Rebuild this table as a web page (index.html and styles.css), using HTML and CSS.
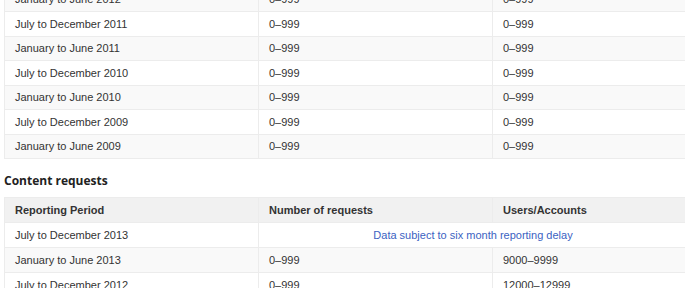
FILE: index.html
```html
<!DOCTYPE html>
<html>
<head>
<meta charset="utf-8">
<link rel="stylesheet" href="styles.css">
</head>
<body>
<main class="page">
  <table class="data first">
    <colgroup><col class="c1"><col class="c2"><col class="c3"></colgroup>
    <tbody>
      <tr class="alt"><td>January to June 2012</td><td>0–999</td><td>0–999</td></tr>
      <tr><td>July to December 2011</td><td>0–999</td><td>0–999</td></tr>
      <tr class="alt"><td>January to June 2011</td><td>0–999</td><td>0–999</td></tr>
      <tr><td>July to December 2010</td><td>0–999</td><td>0–999</td></tr>
      <tr class="alt"><td>January to June 2010</td><td>0–999</td><td>0–999</td></tr>
      <tr><td>July to December 2009</td><td>0–999</td><td>0–999</td></tr>
      <tr class="alt"><td>January to June 2009</td><td>0–999</td><td>0–999</td></tr>
    </tbody>
  </table>
  <h3 class="section-title">Content requests</h3>
  <table class="data second">
    <colgroup><col class="c1"><col class="c2"><col class="c3"></colgroup>
    <thead>
      <tr><th>Reporting Period</th><th>Number of requests</th><th>Users/Accounts</th></tr>
    </thead>
    <tbody>
      <tr><td>July to December 2013</td><td colspan="2" class="note"><a href="#">Data subject to six month reporting delay</a></td></tr>
      <tr class="alt"><td>January to June 2013</td><td>0–999</td><td>9000–9999</td></tr>
      <tr><td>July to December 2012</td><td>0–999</td><td>12000–12999</td></tr>
    </tbody>
  </table>
</main>
</body>
</html>
```
FILE: styles.css
```css
html, body {
  margin: 0;
  padding: 0;
  overflow: hidden;
  background: #fff;
}
.page {
  padding-left: 4px;
  font-family: "Liberation Sans", Arial, sans-serif;
  font-size: 11px;
  color: #333;
}
.data {
  width: 683px;
  border-collapse: collapse;
  table-layout: fixed;
}
.data.first {
  margin-top: -13.5px;
}
.c1 { width: 254px; }
.c2 { width: 234px; }
.c3 { width: 195px; }
.data tr {
  height: 24.5px;
}
.data.second tr {
  height: 25px;
}
.data td, .data th {
  padding: 0 10px;
  border: 1px solid #ececec;
  text-align: left;
  vertical-align: middle;
  line-height: 14px;
}
.data th {
  font-weight: bold;
  background: #f1f1f1;
  color: #333;
}
.data tr.alt td {
  background: #f9f9f9;
}
.note {
  text-align: center !important;
}
.note a {
  color: #3b62c2;
  text-decoration: none;
}
.section-title {
  font-family: "Open Sans", "DejaVu Sans", sans-serif;
  font-weight: 700;
  font-size: 12px;
  color: #222;
  line-height: 18px;
  margin: 13px 0 6.5px;
}
```
